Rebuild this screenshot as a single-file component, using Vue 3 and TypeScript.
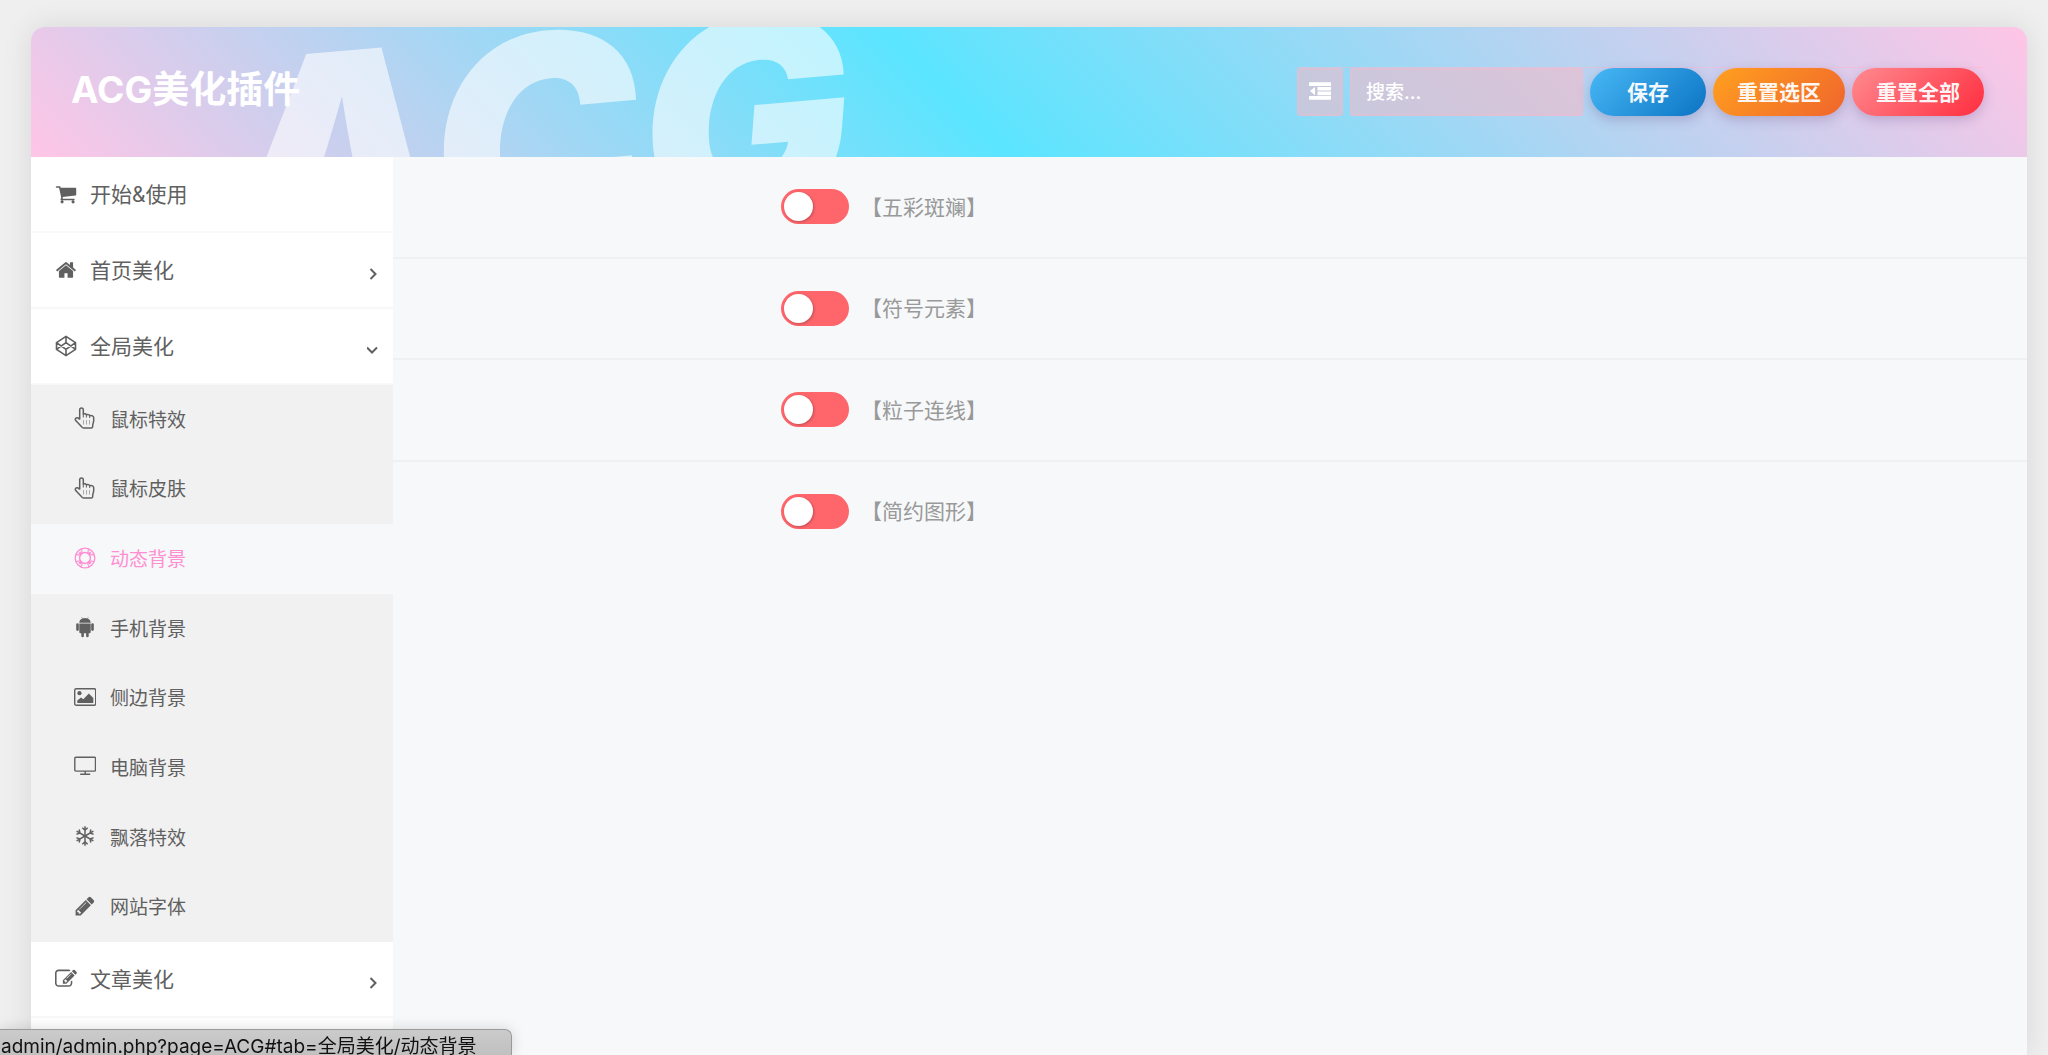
<script setup lang="ts">
import { ref } from 'vue'

interface NavItem {
  label: string
  icon: string
  arrow?: 'right' | 'down'
}

const topItems: NavItem[] = [
  { label: '开始&使用', icon: 'cart' },
  { label: '首页美化', icon: 'home', arrow: 'right' },
  { label: '全局美化', icon: 'codepen', arrow: 'down' },
]

const subItems: NavItem[] = [
  { label: '鼠标特效', icon: 'hand' },
  { label: '鼠标皮肤', icon: 'hand' },
  { label: '动态背景', icon: 'ring' },
  { label: '手机背景', icon: 'android' },
  { label: '侧边背景', icon: 'image' },
  { label: '电脑背景', icon: 'desktop' },
  { label: '飘落特效', icon: 'snow' },
  { label: '网站字体', icon: 'pencil' },
]

const active = ref('动态背景')
const keyword = ref('')

const options = ref([
  { id: 'colorful', label: '【五彩斑斓】', on: false },
  { id: 'symbol', label: '【符号元素】', on: false },
  { id: 'particle', label: '【粒子连线】', on: false },
  { id: 'shape', label: '【简约图形】', on: false },
])
</script>

<template>
  <svg class="sprite" aria-hidden="true">
    <symbol id="cart" viewBox="0 0 1792 1792">
      <path d="M704 1536q0 52-38 90t-90 38-90-38-38-90 38-90 90-38 90 38 38 90zm896 0q0 52-38 90t-90 38-90-38-38-90 38-90 90-38 90 38 38 90zm128-1088v512q0 24-16.500 42.500t-40.500 21.500l-1044 122q13 60 13 70 0 16-24 64h920q26 0 45 19t19 45-19 45-45 19h-1024q-26 0-45-19t-19-45q0-11 8-31.500t16-36 21.500-40 15.500-29.500l-177-823h-204q-26 0-45-19t-19-45 19-45 45-19h256q16 0 28.500 6.500t19.500 15.500 13 24.500 8 26 5.500 29.500 4.500 26h1201q26 0 45 19t19 45z" />
    </symbol>
    <symbol id="home" viewBox="0 0 1792 1792">
      <path d="M1472 992v480q0 26-19 45t-45 19h-384v-384h-256v384h-384q-26 0-45-19t-19-45v-480q0-1 .5-3t.5-3l575-474 575 474q1 2 1 6zm223-69l-62 74q-8 9-21 11h-3q-13 0-21-7l-692-577-692 577q-12 8-24 7-13-2-21-11l-62-74q-8-10-7-23.500t11-21.500l719-599q32-26 76-26t76 26l244 204v-195q0-14 9-23t23-9h192q14 0 23 9t9 23v408l219 182q10 8 11 21.500t-7 23.500z" />
    </symbol>
    <symbol id="codepen" viewBox="0 0 22 22">
      <path d="M11 1.300 20.500 7.600V14.400L11 20.700 1.500 14.400V7.600ZM11 1.300V7.600M11 14.400V20.700M1.500 7.600 11 14.400 20.500 7.600M1.500 14.400 11 7.600 20.500 14.400" fill="none" stroke="currentColor" stroke-width="1.600" stroke-linejoin="round" />
    </symbol>
    <symbol id="hand" viewBox="0 0 22 22">
      <path d="M5.700 12.500V2.800a1.800 1.800 0 0 1 3.600 0V7.200C10.400 6.400 12 6.700 12.400 7.800 13.600 7.200 15.300 7.600 15.700 8.800 17.800 8.200 19.700 9 19.700 11V13.600C19.700 15.500 18.700 16.600 18.700 18.500V19.600Q18.700 20.900 17.600 20.900H9.500Q8.500 20.900 7.900 20.100L1.700 13.600C.6 12 2.200 10 4 10.900L5.700 12.500" fill="none" stroke="currentColor" stroke-width="1.500" stroke-linejoin="round" />
      <path d="M9.300 7.200V10.500M12.400 7.800V10.500M15.700 8.800V11" fill="none" stroke="currentColor" stroke-width="1" />
      <path d="M9.500 13V17.500M12.500 13V17.500M15.500 13V17.500" fill="none" stroke="currentColor" stroke-width=".7" opacity=".7" />
    </symbol>
    <symbol id="ring" viewBox="0 0 22 22">
      <g fill="none" stroke="currentColor">
        <circle cx="11" cy="11" r="9.800" stroke-width="1.300" />
        <circle cx="11" cy="11" r="5.400" stroke-width="1.500" />
        <path d="M8.300 6.300 7.400 2M6.300 8.300 2 7.400M13.700 6.300 14.600 2M15.700 8.300 20 7.400M8.300 15.700 7.400 20M6.300 13.700 2 14.600M13.700 15.700 14.600 20M15.700 13.700 20 14.600" stroke-width="1.100" />
        <path d="m5.300 5.300 2.200 2.200M16.700 5.300l-2.200 2.200M5.300 16.700l2.200-2.200M16.700 16.700l-2.200-2.200" stroke-width="2.600" />
      </g>
    </symbol>
    <symbol id="android" viewBox="0 0 22 22">
      <path d="M5.300 6.800C5.300 4.800 6.600 3.300 8.300 2.600L7.400 1.100 7.800.9 8.800 2.400Q11 1.600 13.200 2.400L14.200.9 14.600 1.100 13.700 2.600C15.400 3.300 16.700 4.800 16.700 6.800Z" />
      <path d="M5.300 7.400H16.700V15.900Q16.700 17.200 15.400 17.200H14.700V19.900a1.300 1.300 0 0 1-2.600 0V17.200H9.900V19.900a1.300 1.300 0 0 1-2.600 0V17.200H6.600Q5.300 17.200 5.300 15.900Z" />
      <rect x="2.200" y="7.300" width="2.600" height="7.600" rx="1.300" />
      <rect x="17.200" y="7.300" width="2.600" height="7.600" rx="1.300" />
    </symbol>
    <symbol id="image" viewBox="0 0 22 22">
      <rect x=".7" y="2.700" width="21" height="16.600" rx="1.600" fill="none" stroke="currentColor" stroke-width="1.400" />
      <circle cx="5.500" cy="7.200" r="2.100" />
      <path d="M3.300 17V14.500L7 11.500 9.300 13.200 14.800 7.500 19.300 12V17Z" />
    </symbol>
    <symbol id="desktop" viewBox="0 0 22 22">
      <path d="M2 2.200H20.500Q21.500 2.200 21.500 3.300V15Q21.500 16.100 20.500 16.100H2Q.8 16.100 .8 15V3.300Q.8 2.200 2 2.200ZM11.200 16V19M6.200 19.300H16.200" fill="none" stroke="currentColor" stroke-width="1.400" />
    </symbol>
    <symbol id="snow" viewBox="0 0 22 22">
      <defs>
        <path id="snow-arm" d="M11 11V1.300M8.300 2.700 11 5.200 13.700 2.700" />
      </defs>
      <g fill="none" stroke="currentColor" stroke-width="1.500">
        <use href="#snow-arm" />
        <use href="#snow-arm" transform="rotate(60 11 11)" />
        <use href="#snow-arm" transform="rotate(120 11 11)" />
        <use href="#snow-arm" transform="rotate(180 11 11)" />
        <use href="#snow-arm" transform="rotate(240 11 11)" />
        <use href="#snow-arm" transform="rotate(300 11 11)" />
      </g>
    </symbol>
    <symbol id="pencil" viewBox="0 0 1792 1792">
      <path d="M491 1536l91-91-235-235-91 91v107h128v128h107zm523-928q0-22-22-22-10 0-17 7l-542 542q-7 7-7 17 0 22 22 22 10 0 17-7l542-542q7-7 7-17zm-54-192l416 416-832 832h-416v-416zm683 96q0 53-37 90l-166 166-416-416 166-165q36-38 90-38 53 0 91 38l235 234q37 39 37 91z" />
    </symbol>
    <symbol id="edit" viewBox="0 0 1792 1792">
      <path d="M888 1184l116-116-152-152-116 116v56h96v96h56zm440-720q-16-16-33 1l-350 350q-17 17-1 33t33-1l350-350q17-17 1-33zm80 594v190q0 119-84.500 203.500t-203.500 84.500h-832q-119 0-203.500-84.500t-84.500-203.500v-832q0-119 84.500-203.500t203.500-84.500h832q63 0 117 25 15 7 18 23 3 17-9 29l-49 49q-14 14-32 8-23-6-45-6h-832q-66 0-113 47t-47 113v832q0 66 47 113t113 47h832q66 0 113-47t47-113v-126q0-13 9-22l64-64q15-15 35-7t20 29zm-96-738l288 288-672 672h-288v-288zm444 132l-92 92-288-288 92-92q28-28 68-28t68 28l152 152q28 28 28 68t-28 68z" />
    </symbol>
    <symbol id="outdent" viewBox="0 0 22 22">
      <path d="M0 2.300H22V6H0ZM8.500 6.900H22V10.600H8.500ZM8.500 11.500H22V15.200H8.500ZM0 16.100H22V19.800H0ZM6 6.900V15.200L1 11Z" />
    </symbol>
    <symbol id="right" viewBox="0 0 12 12">
      <path d="M3.500 1 8.500 6 3.500 11" fill="none" stroke="currentColor" stroke-width="2" />
    </symbol>
    <symbol id="down" viewBox="0 0 12 12">
      <path d="M0 3.500 5 8.500 10 3.500" fill="none" stroke="currentColor" stroke-width="2" />
    </symbol>
  </svg>

  <div class="page">
    <div class="card">
      <header class="header">
        <span class="watermark" aria-hidden="true">ACG</span>
        <h1 class="title">ACG美化插件</h1>
        <form class="tools" @submit.prevent>
          <button class="toggle-all" type="button" aria-label="展开全部">
            <svg class="icon"><use href="#outdent" /></svg>
          </button>
          <input v-model="keyword" class="search" type="text" placeholder="搜索..." aria-label="搜索" />
          <button class="btn save" type="submit">保存</button>
          <button class="btn reset-section" type="button">重置选区</button>
          <button class="btn reset-all" type="button">重置全部</button>
        </form>
      </header>

      <div class="body">
        <nav class="sidebar">
          <a v-for="item in topItems" :key="item.label" class="nav-item" href="#">
            <svg class="icon"><use :href="'#' + item.icon" /></svg>
            <span class="nav-label">{{ item.label }}</span>
            <svg v-if="item.arrow" class="arrow"><use :href="'#' + item.arrow" /></svg>
          </a>
          <div class="submenu">
            <a
              v-for="item in subItems"
              :key="item.label"
              class="sub-item"
              :class="{ active: item.label === active }"
              href="#"
              @click.prevent="active = item.label"
            >
              <svg class="icon"><use :href="'#' + item.icon" /></svg>
              <span>{{ item.label }}</span>
            </a>
          </div>
          <a class="nav-item" href="#">
            <svg class="icon"><use href="#edit" /></svg>
            <span class="nav-label">文章美化</span>
            <svg class="arrow"><use href="#right" /></svg>
          </a>
        </nav>

        <main class="content">
          <div class="options">
            <div v-for="opt in options" :key="opt.id" class="option">
              <input :id="opt.id" v-model="opt.on" class="switch" type="checkbox" />
              <label :for="opt.id">{{ opt.label }}</label>
            </div>
          </div>
        </main>
      </div>
    </div>
    <div class="status">admin/admin.php?page=ACG#tab=全局美化/动态背景</div>
  </div>
</template>

<style>
body {
  margin: 0;
  background: #efefef;
}
</style>

<style scoped>
.sprite {
  position: absolute;
  width: 0;
  height: 0;
}

.page {
  box-sizing: border-box;
  height: 100vh;
  padding: 27px 21px 0 31px;
  overflow: hidden;
  font-family: Inter, "Noto Sans CJK SC", sans-serif;
  color: #606060;
}

.card {
  display: flex;
  flex-direction: column;
  min-height: 100%;
  border-radius: 14px 14px 0 0;
  box-shadow: 0 0 30px rgba(0, 0, 0, 0.1);
}

.header {
  position: relative;
  display: flex;
  align-items: center;
  justify-content: space-between;
  box-sizing: border-box;
  height: 130px;
  padding: 0 43px 0 40px;
  overflow: hidden;
  border-radius: 14px 14px 0 0;
  background: linear-gradient(45deg, #ffc5e6, #5be5ff 46%, #ffc5e6);
}

.watermark {
  position: absolute;
  top: -30px;
  left: 190px;
  font-size: 280px;
  font-style: italic;
  font-weight: 900;
  line-height: 280px;
  color: rgba(255, 255, 255, 0.6);
  transform: rotate(-5deg);
}

.title {
  position: relative;
  margin: 0 0 4px;
  font-size: 37px;
  font-weight: 700;
  line-height: 48px;
  color: #fff;
}

.tools {
  position: relative;
  display: flex;
  gap: 7px;
  height: 48px;
  margin-bottom: 2px;
  border-top: 1px solid rgba(255, 182, 203, 0.5);
}

.toggle-all {
  display: flex;
  align-items: center;
  justify-content: center;
  width: 46px;
  padding: 0;
  border: 2px solid rgba(255, 182, 203, 0.3);
  border-radius: 3px;
  background: rgba(255, 182, 193, 0.5);
  color: #fff;
}

.toggle-all .icon {
  margin-bottom: 2px;
}

.search {
  box-sizing: border-box;
  width: 233px;
  padding: 2px 14px 0;
  border: 2px solid rgba(255, 182, 203, 0.3);
  border-radius: 3px;
  background: rgba(255, 182, 193, 0.5);
  font: 500 19px Inter, "Noto Sans CJK SC", sans-serif;
  color: #fff;
}

.search::placeholder {
  color: #fff;
  opacity: 1;
}

.btn {
  width: 132px;
  padding: 0 0 2px;
  border: 0;
  border-radius: 24px;
  box-shadow: 0 4px 12px rgba(80, 60, 120, 0.25);
  font: 700 21px Inter, "Noto Sans CJK SC", sans-serif;
  color: rgba(255, 255, 255, 0.95);
}

.save {
  width: 116px;
  background: linear-gradient(135deg, #48b8f5, #0b74c4);
}

.reset-section {
  background: linear-gradient(135deg, #ffa01f, #f0652c);
}

.reset-all {
  background: linear-gradient(135deg, #ff8b90, #ff2d3f);
}

.body {
  display: flex;
  flex: 1;
  background: #f6f8fa;
}

.sidebar {
  flex: 0 0 362px;
  background: #fff;
}

.icon {
  flex: none;
  width: 22px;
  height: 22px;
  fill: currentColor;
}

.nav-item {
  display: flex;
  align-items: center;
  gap: 13px;
  box-sizing: border-box;
  height: 76px;
  padding: 0 14px 0 24px;
  border-bottom: 2px solid #f8f8f8;
  font-size: 21px;
  color: #606060;
  text-decoration: none;
}

.nav-label {
  margin-bottom: 3px;
}

.arrow {
  width: 12px;
  height: 12px;
  margin: 7px 0 0 auto;
}

.submenu {
  display: grid;
  grid-auto-rows: 1fr;
  height: 557px;
  background: #f1f1f1;
}

.sub-item {
  display: flex;
  align-items: center;
  gap: 14px;
  padding: 0 0 3px 43px;
  font-size: 19px;
  color: #606060;
  text-decoration: none;
}

.sub-item.active {
  background: #f6f8fa;
  color: #ff8fd2;
}

.content {
  flex: 1;
}

.options {
  display: grid;
  grid-auto-rows: 1fr;
  height: 406px;
}

.option {
  display: flex;
  align-items: center;
  gap: 12px;
  padding-left: 388px;
  border-bottom: 2px solid #eff0f2;
  font-size: 21px;
  color: #999;
}

.option label {
  margin-bottom: 2px;
}

.option:last-child {
  border-bottom-color: transparent;
}

.switch {
  box-sizing: border-box;
  width: 68px;
  height: 35px;
  margin: 0;
  padding: 3px;
  border-radius: 18px;
  background: #ff666c;
  appearance: none;
}

.switch::before {
  display: block;
  width: 29px;
  height: 29px;
  border-radius: 50%;
  background: #fff;
  box-shadow: 1px 1px 3px rgba(0, 0, 0, 0.25);
  content: "";
}

.switch:checked {
  background: #4cc97a;
}

.switch:checked::before {
  margin-left: auto;
}

.status {
  position: fixed;
  bottom: 0;
  left: 0;
  box-sizing: border-box;
  height: 26px;
  padding: 0 35px 0 1px;
  overflow: hidden;
  border: 1px solid #9a9a9a;
  border-width: 1px 1px 0 0;
  border-radius: 0 7px 0 0;
  background: linear-gradient(#cbcbcb, #c0c0c0);
  box-shadow: 0 0 14px rgba(0, 0, 0, 0.15);
  font-size: 19px;
  line-height: 34px;
  white-space: nowrap;
  color: #111;
}
</style>
